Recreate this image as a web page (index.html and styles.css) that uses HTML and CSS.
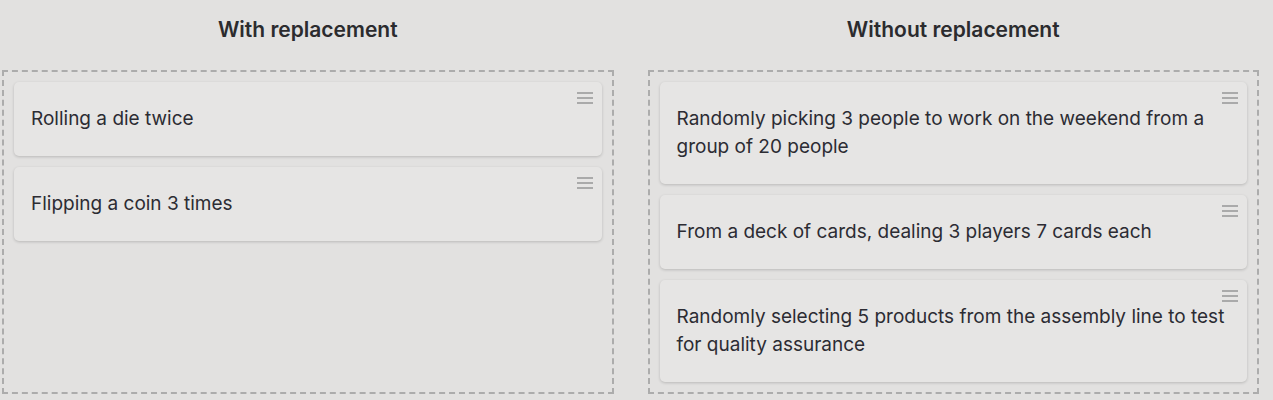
FILE: index.html
```html
<!DOCTYPE html>
<html>
<head>
<meta charset="utf-8">
<link rel="stylesheet" href="styles.css">
</head>
<body>
<div class="board">
  <section class="column">
    <h2 class="column-title">With replacement</h2>
    <div class="dropzone">
      <div class="card"><span class="card-text">Rolling a die twice</span><span class="handle"></span></div>
      <div class="card"><span class="card-text">Flipping a coin 3 times</span><span class="handle"></span></div>
    </div>
  </section>
  <section class="column">
    <h2 class="column-title">Without replacement</h2>
    <div class="dropzone">
      <div class="card"><span class="card-text">Randomly picking 3 people to work on the weekend from a group of 20 people</span><span class="handle"></span></div>
      <div class="card"><span class="card-text">From a deck of cards, dealing 3 players 7 cards each</span><span class="handle"></span></div>
      <div class="card"><span class="card-text">Randomly selecting 5 products from the assembly line to test for quality assurance</span><span class="handle"></span></div>
    </div>
  </section>
</div>
</body>
</html>
```
FILE: styles.css
```css
html, body {
  margin: 0;
  padding: 0;
  background: #e2e1e0;
  font-family: "Inter", "Liberation Sans", sans-serif;
  color: #2b2b2e;
}
.board {
  display: grid;
  grid-template-columns: 1fr 1fr;
  column-gap: 34px;
  padding: 0 14px 0 2px;
}
.column {
  display: flex;
  flex-direction: column;
}
.column-title {
  margin: 0;
  height: 70px;
  padding-top: 16px;
  box-sizing: border-box;
  text-align: center;
  font-size: 21px;
  font-weight: 600;
  line-height: 28px;
  color: #2b2b2e;
}
.dropzone {
  border: 2px dashed #acacac;
  height: 324px;
  box-sizing: border-box;
  padding: 10px;
  display: flex;
  flex-direction: column;
  gap: 11px;
}
.card {
  position: relative;
  background: #e6e5e4;
  border-radius: 5px;
  box-shadow: 0 1px 3px rgba(0,0,0,0.18);
  padding: 23px 12px 23px 17px;
  font-size: 19px;
  line-height: 28px;
  color: #2c2c33;
}
.handle {
  position: absolute;
  top: 10px;
  right: 9px;
  width: 16px;
  height: 12px;
  background: linear-gradient(#aaa 0 2px, transparent 2px 5px, #aaa 5px 7px, transparent 7px 10px, #aaa 10px 12px);
}
```
